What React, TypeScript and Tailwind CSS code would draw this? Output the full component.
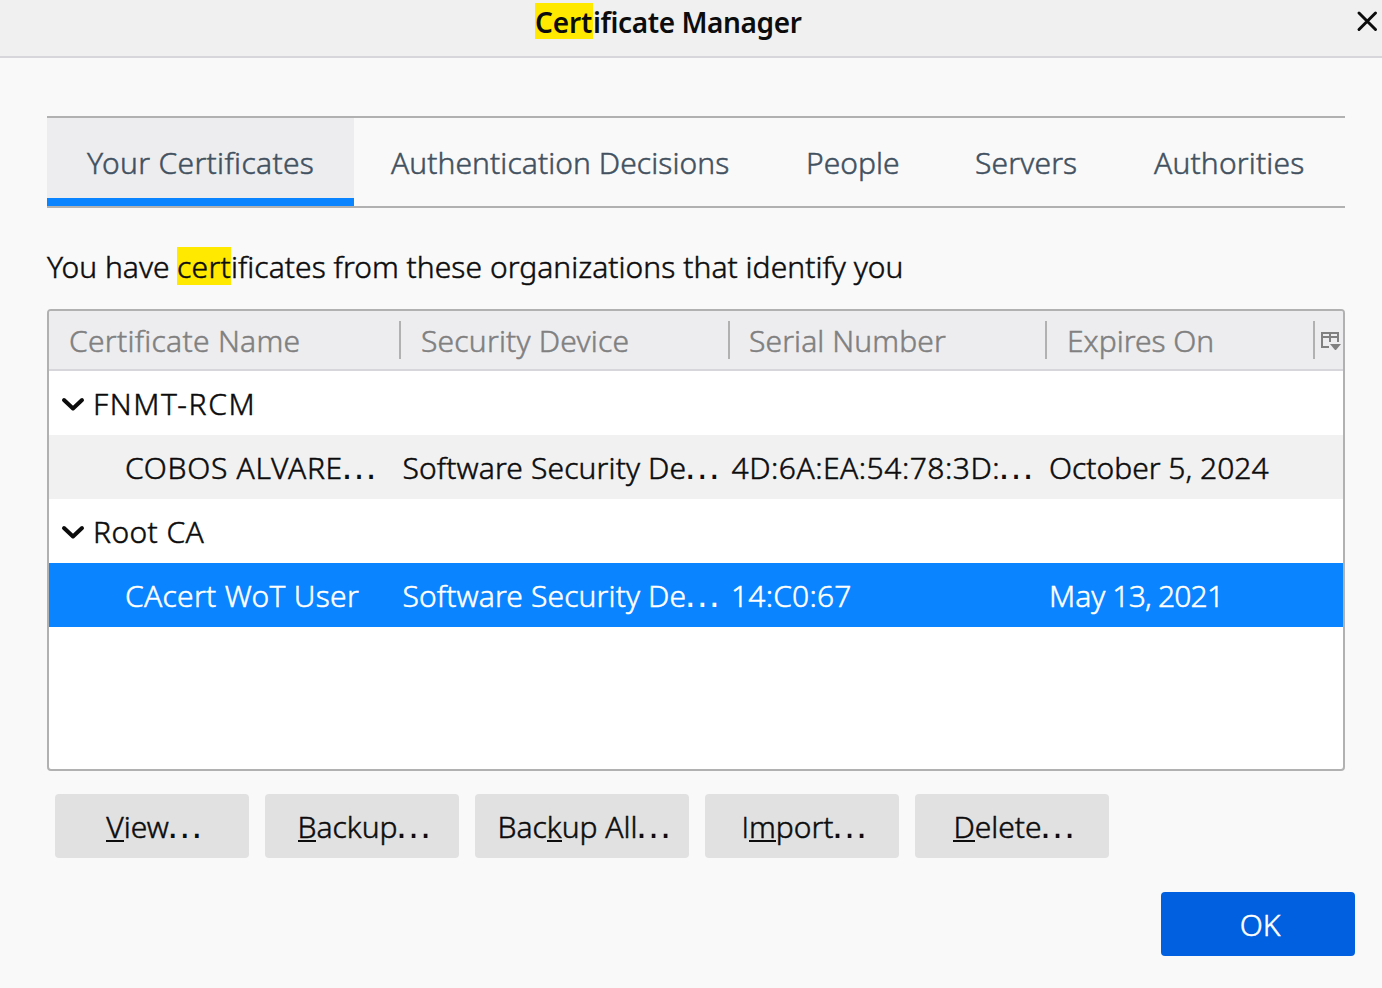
import type { ReactNode } from "react";

function Ellipsis() {
  return <span className="-ml-[3px] font-['Liberation_Sans'] text-[38px] leading-[0] font-normal tracking-normal [-webkit-text-stroke-width:0px]">…</span>;
}

function Mark({ className, children }: { className: string; children: ReactNode }) {
  return <mark className={`inline-block bg-[#ffe900] text-inherit ${className}`}>{children}</mark>;
}

function Chevron() {
  return (
    <svg className="ml-3 h-5 w-6 shrink-0" viewBox="0 0 24 20" fill="none" stroke="#0c0c0d" strokeWidth="4" strokeLinecap="round" strokeLinejoin="round">
      <path d="M3 7 12 15.5 21 7" />
    </svg>
  );
}

function ColumnPicker() {
  return (
    <svg className="ml-[5px] h-5 w-[22px]" viewBox="0 0 22 20" fill="#808080">
      <path d="M1 2H19V12H17V8H11V12H9V8H3V16H9V18H1ZM3 4V6H9V4ZM11 4V6H17V4Z" fillRule="evenodd" />
      <path d="M10 14H21L16 20H15Z" />
    </svg>
  );
}

function HeaderCell({ className, children }: { className: string; children: ReactNode }) {
  return (
    <div className="flex h-[58px] items-center">
      <span className={`flex-1 pt-0.5 leading-[58px] ${className}`}>{children}</span>
      <span className="h-[38px] w-0.5 bg-[#b1b1b1]" />
    </div>
  );
}

function GroupRow({ name, tracking }: { name: string; tracking: string }) {
  return (
    <div className="flex h-16 items-center">
      <Chevron />
      <span className={`ml-2 leading-[64px] pt-0.5 ${tracking}`}>{name}</span>
    </div>
  );
}

const columns = "grid grid-cols-[352px_329px_317px_268px_28px]";

function Key({ children }: { children: ReactNode }) {
  return <span className="inline-block h-[34px] border-b-2 border-[#0c0c0d] leading-[38px]">{children}</span>;
}

function Button({ width, children }: { width: string; children: ReactNode }) {
  return (
    <button className={`h-16 rounded bg-[#e1e1e1] ${width}`}>
      <span className="flex items-baseline justify-center pt-0.5 pl-1.5 leading-[62px]">{children}</span>
    </button>
  );
}

export default function App() {
  return (
    <div className="flex h-[988px] w-[1382px] flex-col bg-[#f9f9fa] font-['Noto_Sans',sans-serif] text-[30px] font-light whitespace-pre text-[#0c0c0d] [-webkit-text-stroke-width:0.5px]">
      <header className="flex h-[58px] items-start border-b-2 border-[#d7d7db] bg-[#f0f0f0] pt-[3px]">
        <h1 className="ml-[535px] w-[820px] text-[28px] leading-[38px] font-semibold tracking-[-0.4px] [-webkit-text-stroke-width:0px]">
          <Mark className="h-9 w-[58px] tracking-[-0.1px]">Cert</Mark>ificate Manager
        </h1>
        <svg className="mt-[7px] ml-[1px] h-[22px] w-[22px]" viewBox="0 0 22 22" stroke="#0c0c0d" strokeWidth="3" strokeLinecap="round">
          <path d="M3 3 19.5 19.5M19.5 3 3 19.5" />
        </svg>
      </header>

      <main className="flex flex-col pt-[58px] pr-[37px] pl-[47px]">
        <nav className="flex h-[92px] border-y-2 border-[#b1b1b1] leading-[90px] text-[#425160]">
          <div className="h-[88px] w-[307px] border-b-8 border-[#0a84ff] bg-[#ededf0] pl-10 tracking-[0.34px]">Your Certificates</div>
          <div className="w-[413px] pl-[37px] tracking-[0.07px]">Authentication Decisions</div>
          <div className="w-[171px] pl-[39px]">People</div>
          <div className="w-[178px] pl-[37px] tracking-[0.15px]">Servers</div>
          <div className="pl-[38px] tracking-[0.18px]">Authorities</div>
        </nav>

        <p className="mt-[39px] h-[38px] leading-[40px] tracking-[0.04px]">
          <span className="inline-block w-[130px] tracking-normal">You have </span><Mark className="h-[38px] w-[54px] tracking-[0.28px]">cert</Mark>ificates from these organizations that identify you
        </p>

        <section className="mt-6 h-[462px] overflow-hidden rounded border-2 border-[#b1b1b1] bg-white">
          <div className={`${columns} h-[60px] border-b-2 border-[#d7d7db] bg-[#ededf0] text-[#808080]`}>
            <HeaderCell className="pl-5 tracking-[0.29px]">Certificate Name</HeaderCell>
            <HeaderCell className="pl-5 tracking-[0.2px]">Security Device</HeaderCell>
            <HeaderCell className="pl-[19px] tracking-[0.1px]">Serial Number</HeaderCell>
            <HeaderCell className="pl-5">Expires On</HeaderCell>
            <div className="flex h-[58px] items-center"><ColumnPicker /></div>
          </div>
          <GroupRow name="FNMT-RCM" tracking="tracking-[1.6px]" />
          <div className={`${columns} h-16 bg-[#f1f1f2] leading-[66px]`}>
            <span className="pl-[76px] tracking-[0.7px]">COBOS ALVARE<Ellipsis /></span>
            <span className="pl-[1.5px] tracking-[0.13px]">Software Security De<Ellipsis /></span>
            <span className="pl-[1.5px] tracking-[0.5px]">4D:6A:EA:54:78:3D:<Ellipsis /></span>
            <span className="pl-0.5">October 5, 2024</span>
          </div>
          <GroupRow name="Root CA" tracking="tracking-[0.4px]" />
          <div className={`${columns} h-16 bg-[#0a84ff] leading-[66px] text-white`}>
            <span className="pl-[76px] tracking-[0.3px]">CAcert WoT User</span>
            <span className="pl-[1.5px] tracking-[0.13px]">Software Security De<Ellipsis /></span>
            <span className="pl-px tracking-[0.2px]">14:C0:67</span>
            <span className="pl-0.5">May<span className="tracking-[-0.8px]"> 13, 2021</span></span>
          </div>
        </section>

        <div className="mt-[23px] ml-2 flex gap-4">
          <Button width="w-[194px]"><Key>V</Key>iew<Ellipsis /></Button>
          <Button width="w-[194px]"><Key>B</Key>ackup<Ellipsis /></Button>
          <Button width="w-[214px]">Bac<Key>k</Key>up All<Ellipsis /></Button>
          <Button width="w-[194px]"><span className="font-['Open_Sans']">I</span><Key>m</Key>port<Ellipsis /></Button>
          <Button width="w-[194px]"><Key>D</Key>elete<Ellipsis /></Button>
        </div>
      </main>

      <footer className="mt-[34px] flex justify-end pr-[27px]">
        <button className="h-16 w-[194px] rounded bg-[#0060df] pl-1 leading-[64px] text-white">
          <span className="block pt-px leading-[63px]">OK</span>
        </button>
      </footer>
    </div>
  );
}
